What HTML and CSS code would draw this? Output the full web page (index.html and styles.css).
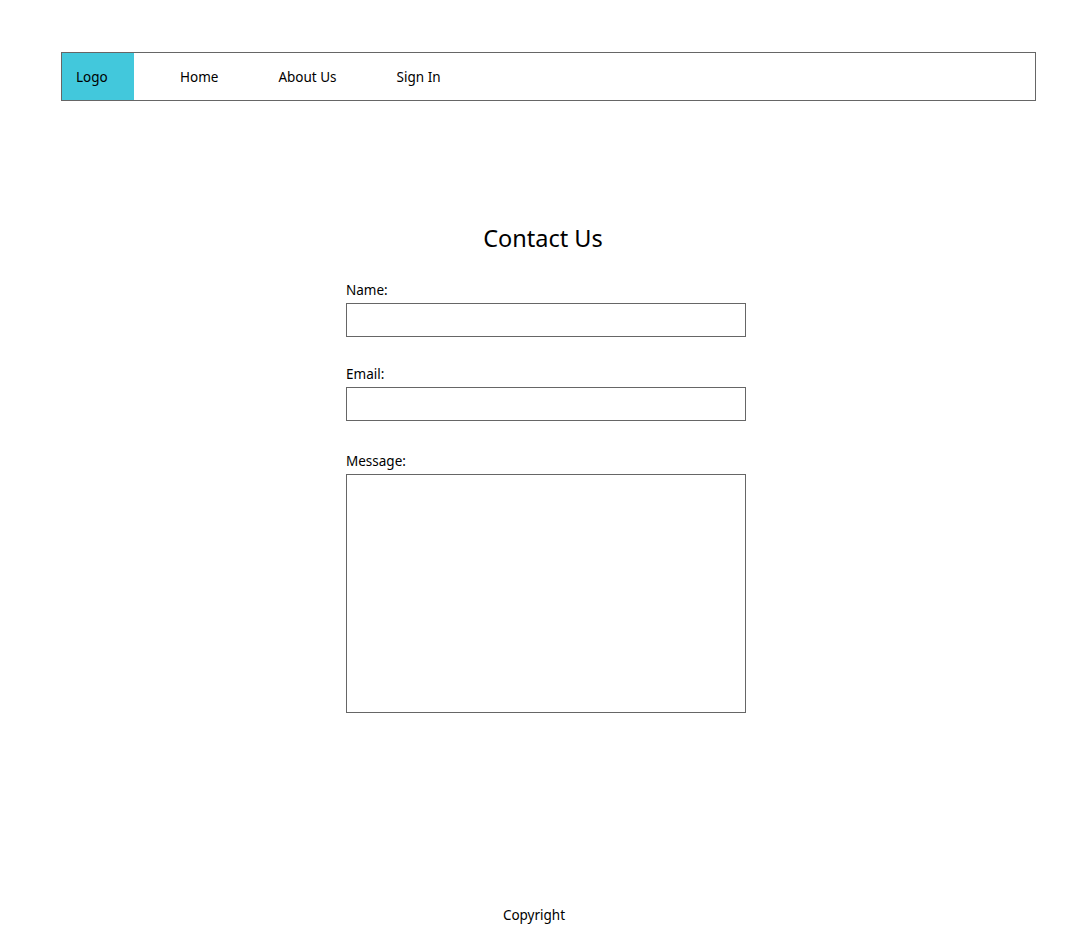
FILE: index.html
```html
<!DOCTYPE html>
<html lang="en">
<head>
<meta charset="utf-8">
<title>Contact Us</title>
<link rel="stylesheet" href="styles.css">
</head>
<body>
<header class="site-header">
  <div class="logo">Logo</div>
  <nav class="nav">
    <a class="nav-link" href="#">Home</a>
    <a class="nav-link" href="#">About Us</a>
    <a class="nav-link" href="#">Sign In</a>
  </nav>
</header>
<main class="content">
  <h1 class="title">Contact Us</h1>
  <form class="contact-form">
    <label class="field">
      <span class="field-label">Name:</span>
      <input class="field-input" type="text">
    </label>
    <label class="field">
      <span class="field-label">Email:</span>
      <input class="field-input" type="email">
    </label>
    <label class="field field-message">
      <span class="field-label">Message:</span>
      <textarea class="field-textarea"></textarea>
    </label>
  </form>
</main>
<footer class="footer">Copyright</footer>
</body>
</html>
```
FILE: styles.css
```css
* { box-sizing: border-box; }
html, body { margin: 0; padding: 0; }
body {
  font-family: "Noto Sans", "Open Sans", sans-serif;
  font-size: 13.5px;
  color: #000;
  background: #fff;
  width: 1080px;
  height: 934px;
  display: flex;
  flex-direction: column;
}
.site-header {
  margin: 52px 0 0 61px;
  width: 975px;
  height: 49px;
  border: 1px solid #666;
  display: flex;
  align-items: stretch;
}
.logo {
  width: 72px;
  background: #42c8dc;
  display: flex;
  align-items: center;
  padding-left: 14px;
}
.nav {
  display: flex;
  align-items: center;
  margin-left: 16px;
}
.nav-link {
  color: #000;
  text-decoration: none;
  padding: 0 30px;
}
.content {
  display: flex;
  flex-direction: column;
  align-items: center;
  padding-top: 121px;
  margin-left: 6px;
}
.title {
  font-weight: normal;
  font-size: 23.5px;
  line-height: 32px;
  margin: 0 0 27px 0;
}
.contact-form {
  width: 400px;
  margin-left: 6px;
  display: flex;
  flex-direction: column;
  gap: 28px;
}
.field {
  display: flex;
  flex-direction: column;
}
.field-label {
  line-height: 18px;
  margin-bottom: 4px;
}
.field-input, .field-textarea {
  border: 1px solid #666;
  border-radius: 0;
  width: 400px;
  font: inherit;
  margin: 0;
  padding: 4px;
  background: #fff;
}
.field-input { height: 34px; }
.field-message { margin-top: 3px; }
.field-textarea { height: 239px; resize: none; }
.footer {
  margin-top: auto;
  text-align: center;
  padding-bottom: 9px;
  margin-right: 12px;
  line-height: 20px;
}
```
